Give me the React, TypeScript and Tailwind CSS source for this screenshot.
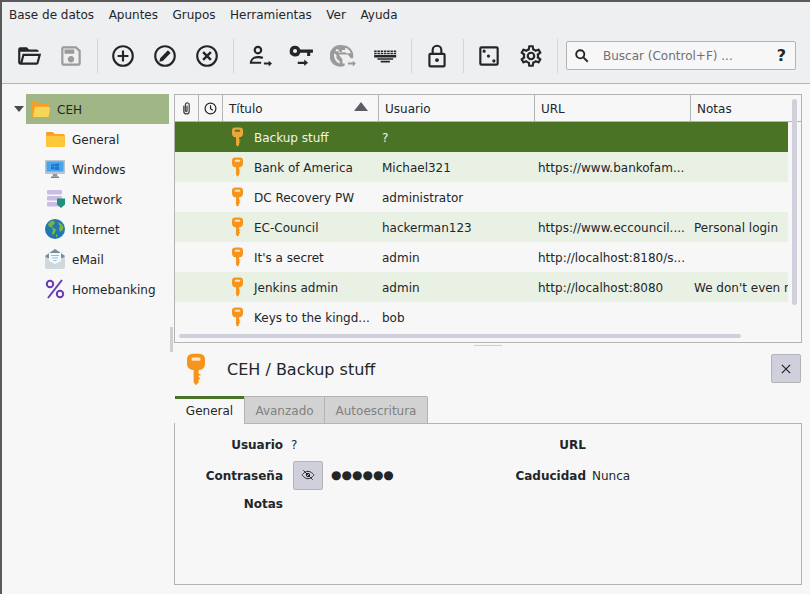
import type { ReactNode } from "react"

const font = "font-['DejaVu_Sans',sans-serif]"

function Mdi({ d, className = "" }: { d: string; className?: string }) {
  return (
    <svg viewBox="0 0 24 24" className={`w-[26px] h-[26px] ${className}`} fill="currentColor" fillRule="evenodd">
      <path d={d} />
    </svg>
  )
}

const arrow = "M16.500 18.100h4.500v-1.800l3 2.700-3 2.700v-1.800h-4.500z"
const ring = "M12,20C7.59,20 4,16.41 4,12C4,7.59 7.59,4 12,4C16.41,4 20,7.59 20,12C20,16.41 16.41,20 12,20M12,2A10,10 0 0,0 2,12A10,10 0 0,0 12,22A10,10 0 0,0 22,12A10,10 0 0,0 12,2"
const pip = (x: number, y: number) => `M${x} ${y - 1.5}a1.500 1.500 0 1 1 0 3a1.500 1.500 0 1 1 0-3Z`
const dashes = (y: number) =>
  [2, 5, 8, 11, 14, 17, 20].map((x) => `M${x} ${y}h2.300v1.300h-2.300z`).join("")

const icons = {
  open: "M6.1,10L4,18V8H21A2,2 0 0,0 19,6H12L10,4H4A2,2 0 0,0 2,6V18A2,2 0 0,0 4,20H19C19.9,20 20.7,19.4 20.9,18.5L23.2,10H6.1M19,18H6L7.6,12H20.6L19,18Z",
  save: "M17 3H5C3.89 3 3 3.9 3 5V19C3 20.1 3.89 21 5 21H19C20.1 21 21 20.1 21 19V7L17 3M19 19H5V5H16.17L19 7.83V19M12 12C10.34 12 9 13.34 9 15S10.34 18 12 18 15 16.66 15 15 13.66 12 12 12M6 6H15V10H6V6Z",
  plus: ring + "M13,7H11V11H7V13H11V17H13V13H17V11H13V7Z",
  edit: ring + "M14.700,6.800L17.200,9.300L10,16.500L6.800,17.200L7.500,14Z",
  del: ring + "M14.800,7.600L12,10.400L9.200,7.600L7.600,9.200L10.400,12L7.600,14.800L9.200,16.400L12,13.600L14.800,16.400L16.400,14.800L13.600,12L16.400,9.200Z",
  user: "M11 2.500a4 4 0 1 1 0 8 4 4 0 0 1 0-8m0 2a2 2 0 1 0 0 4 2 2 0 0 0 0-4M11 12c2 0 3.700.3 5 .9l-1 1.800c-1-.4-2.300-.7-4-.7-3.300 0-5 1.200-5.300 3.200H14v2H3.500c0-4.700 3.500-7.200 7.500-7.200Z" + arrow,
  key: "M6.500 2.500a5 5 0 0 1 4.800 3.500H23v3h-2.500v3h-2.800V9h-6.400a5 5 0 1 1-4.800-6.500m0 3a1.900 1.900 0 1 0 0 3.800 1.900 1.900 0 0 0 0-3.800Z" + "M9 17.300h6v-2l3.500 3-3.500 3v-2H9z",
  web: "M11.500 2a10 10 0 0 1 10 10c0 .7-.1 1.400-.2 2h-2.100l-2.700-3.500H8l3.500 4.500v3.900a7.900 7.900 0 0 0 2 .1v2A10 10 0 1 1 11.500 2M4 9.500A8 8 0 0 0 9 19.100V17l-3-3V11zM14 4.400V6.500h-3V9H8V6L6 5.500A8 8 0 0 0 5 7.500h4v1h5l1 1h4.300A8 8 0 0 0 14 4.400Z" + arrow,
  keyboard: dashes(7) + dashes(9) + "M2 11h20.300v2.300H2zM5 14h14.500v1.500H5zM8 16.300h8.500v1.700H8z",
  lock: "M12 1.500a5 5 0 0 1 5 5V9h1a2 2 0 0 1 2 2v9.500a2 2 0 0 1-2 2H6a2 2 0 0 1-2-2V11a2 2 0 0 1 2-2h1V6.500a5 5 0 0 1 5-5m0 2a3 3 0 0 0-3 3V9h6V6.500a3 3 0 0 0-3-3M6 11v9.500h12V11zm6 3a1.800 1.800 0 1 1 0 3.600 1.800 1.800 0 0 1 0-3.600Z",
  dice: "M5 3h14a2 2 0 0 1 2 2v14a2 2 0 0 1-2 2H5a2 2 0 0 1-2-2V5a2 2 0 0 1 2-2ZM5 5v14h14V5Z" + pip(7.500, 7.500) + pip(11.500, 12) + pip(16.500, 16.500),
  gear: "M12,8A4,4 0 0,1 16,12A4,4 0 0,1 12,16A4,4 0 0,1 8,12A4,4 0 0,1 12,8M12,10A2,2 0 0,0 10,12A2,2 0 0,0 12,14A2,2 0 0,0 14,12A2,2 0 0,0 12,10M10,22C9.750,22 9.540,21.820 9.500,21.580L9.130,18.930C8.500,18.680 7.960,18.340 7.440,17.940L4.950,18.950C4.730,19.030 4.460,18.950 4.340,18.730L2.340,15.270C2.210,15.050 2.270,14.780 2.460,14.630L4.570,12.970L4.500,12L4.570,11L2.460,9.370C2.270,9.220 2.210,8.950 2.340,8.730L4.340,5.270C4.460,5.050 4.730,4.960 4.950,5.050L7.440,6.050C7.960,5.660 8.500,5.320 9.130,5.070L9.500,2.420C9.540,2.180 9.750,2 10,2H14C14.250,2 14.460,2.180 14.500,2.420L14.870,5.070C15.500,5.320 16.040,5.660 16.560,6.050L19.050,5.050C19.270,4.960 19.540,5.050 19.660,5.270L21.660,8.730C21.790,8.950 21.730,9.220 21.540,9.370L19.430,11L19.500,12L19.430,13L21.540,14.630C21.730,14.780 21.790,15.050 21.660,15.270L19.660,18.730C19.540,18.950 19.270,19.040 19.050,18.950L16.560,17.950C16.040,18.340 15.500,18.680 14.870,18.930L14.500,21.580C14.460,21.820 14.250,22 14,22H10M11.250,4L10.880,6.610C9.680,6.860 8.620,7.500 7.850,8.390L5.440,7.350L4.690,8.650L6.800,10.200C6.400,11.370 6.400,12.640 6.800,13.800L4.680,15.360L5.430,16.660L7.860,15.620C8.630,16.500 9.680,17.140 10.870,17.380L11.240,20H12.760L13.130,17.390C14.320,17.140 15.370,16.500 16.140,15.620L18.570,16.660L19.320,15.360L17.200,13.810C17.600,12.640 17.600,11.370 17.200,10.200L19.310,8.650L18.560,7.350L16.150,8.390C15.380,7.500 14.320,6.860 13.120,6.620L12.750,4H11.250Z",
}

function ToolButton({ d, muted }: { d: string; muted?: boolean }) {
  return (
    <div className={`w-[42px] flex items-center justify-center ${muted ? "text-[#9a9a9a]" : "text-[#232629]"}`}>
      <Mdi d={d} />
    </div>
  )
}

function Sep() {
  return (
    <div className="w-[10px] flex justify-center self-center">
      <div className="w-px h-[34px] bg-[#d4d5d7]" />
    </div>
  )
}

function Toolbar() {
  return (
    <div className="h-[55px] flex items-center pl-[6px] pr-[12px]">
      <ToolButton d={icons.open} />
      <ToolButton d={icons.save} muted />
      <Sep />
      <ToolButton d={icons.plus} />
      <ToolButton d={icons.edit} />
      <ToolButton d={icons.del} />
      <Sep />
      <ToolButton d={icons.user} />
      <ToolButton d={icons.key} />
      <ToolButton d={icons.web} muted />
      <ToolButton d={icons.keyboard} />
      <Sep />
      <ToolButton d={icons.lock} />
      <Sep />
      <ToolButton d={icons.dice} />
      <ToolButton d={icons.gear} />
      <Sep />
      <div className="ml-[4px] w-[230px] h-[29px] flex items-center border border-[#b4b4b4] rounded-[2px] bg-[#f7f7f7]">
        <svg viewBox="0 0 24 24" className="w-[15px] h-[15px] ml-[7px] text-[#232629]" fill="none" stroke="currentColor" strokeWidth="3">
          <circle cx="10" cy="10" r="6.500" />
          <path d="M15 15l7 7" />
        </svg>
        <span className="ml-[14px] text-[#6e7075] flex-1">Buscar (Control+F) ...</span>
        <span className="mr-[9px] text-[16px] font-bold text-[#232629]">?</span>
      </div>
    </div>
  )
}

function KeyIcon({ muted, className = "w-[11px] h-[20px]" }: { muted?: boolean; className?: string }) {
  const fill = muted ? "#eba737" : "#f7941d"
  return (
    <svg viewBox="0 0 12 21" className={className}>
      <path d="M3.500 0h5A3.500 3.500 0 0 1 12 3.500v3.500a4 4 0 0 1-4.200 3.800V13.500h1.200v1H7.800v1.500h1v1H7.800V19l-1.800 2-1.600-2v-8.200A4 4 0 0 1 0 7V3.500A3.500 3.500 0 0 1 3.500 0Z" fill={fill} />
      <rect x="3" y="2.500" width="6" height="2.200" rx="1" fill={muted ? "#5d6f33" : "#fde5c6"} />
    </svg>
  )
}

function FolderIcon({ light }: { light?: boolean }) {
  return (
    <svg viewBox="0 0 20 16" className="w-[19px] h-[15px]">
      <path d="M1 0h6l2 2h9a2 2 0 0 1 2 2v10a2 2 0 0 1-2 2H2a2 2 0 0 1-2-2V1a1 1 0 0 1 1-1Z" fill="#f59f24" />
      {light ? (
        <path d="M4 5h14a2 2 0 0 1 2 2l-1 7a2 2 0 0 1-2 2H2Z" fill="#f6d659" />
      ) : (
        <path d="M0 4h18a2 2 0 0 1 2 2v8a2 2 0 0 1-2 2H2a2 2 0 0 1-2-2Z" fill="#ffc73a" />
      )}
    </svg>
  )
}

const groupIcons: Record<string, ReactNode> = {
  General: <FolderIcon />,
  Windows: (
    <svg viewBox="0 0 20 18" className="w-[20px] h-[18px]">
      <rect width="20" height="14" rx="1" fill="#b9c4cc" />
      <rect x="1.500" y="1.500" width="17" height="10" fill="#4aa3e8" />
      <path d="M6 4.500l3.500-.5v2.500H6zM10 4l4-.6v3.100h-4zM6 7h3.500v2.500L6 9zM10 7h4v3.100l-4-.6z" fill="#1976d2" />
      <path d="M8 14h4l.500 2.500h-5z" fill="#8a979f" />
      <rect x="6" y="16.500" width="8" height="1.500" fill="#78858d" />
    </svg>
  ),
  Network: (
    <svg viewBox="0 0 20 18" className="w-[20px] h-[18px]">
      <rect x="2" y="0" width="15" height="4.500" rx="1" fill="#c9bde6" />
      <rect x="2" y="6" width="15" height="4.500" rx="1" fill="#c9bde6" />
      <rect x="2" y="12" width="15" height="4.500" rx="1" fill="#c9bde6" />
      <path d="M12 8.500h8v6l-4 3.500-4-3.500Z" fill="#1f8f7f" />
    </svg>
  ),
  Internet: (
    <svg viewBox="0 0 20 20" className="w-[20px] h-[20px]">
      <circle cx="10" cy="10" r="10" fill="#1f77b4" />
      <path d="M8 1.500c-2 .5-4 2-5 4l1 2 3 1 1 3-1 2 1 3 2-3 1-3-3-2-1-2 2-1 1-2zM13 3l1 3 1 1-1 3 1 3 3-2 .5-3-2-3zM11 15l2 1.500-2 2z" fill="#7cb342" />
    </svg>
  ),
  eMail: (
    <svg viewBox="0 0 20 20" className="w-[20px] h-[20px]">
      <path d="M0 7l10-7 10 7v11a2 2 0 0 1-2 2H2a2 2 0 0 1-2-2Z" fill="#cfd8dc" />
      <path d="M0 7l10-7 10 7-2 2H2Z" fill="#78909c" />
      <path d="M4 4h12v8l-6 3-6-3Z" fill="#f4f8fa" />
      <path d="M6 6h8v1H6zM7 8.500h6v1H7zM8.500 11h3v1h-3z" fill="#81c3e8" />
    </svg>
  ),
  Homebanking: (
    <svg viewBox="0 0 20 20" className="w-[20px] h-[20px]" fill="none" stroke="#673ab7" strokeWidth="2">
      <circle cx="5" cy="5" r="3.200" />
      <circle cx="15" cy="15" r="3.200" />
      <path d="M17 1L3 19" />
    </svg>
  ),
}

function Sidebar() {
  return (
    <div className="w-[172px] shrink-0 flex flex-col pt-[10px] relative">
      <div className="flex items-center">
        <div className="w-[24px] flex justify-end pr-[2px]">
          <div className="w-0 h-0 border-l-[5px] border-r-[5px] border-t-[6px] border-l-transparent border-r-transparent border-t-[#4a4a50]" />
        </div>
        <div className="w-[143px] h-[30px] bg-[#a0b686] flex items-center pl-[5px]">
          <FolderIcon light />
          <span className="ml-[7px] pt-[2px]">CEH</span>
        </div>
      </div>
      {Object.keys(groupIcons).map((name) => (
        <div key={name} className="h-[30px] flex items-center">
          <div className="w-[43px] shrink-0" />
          <div className="w-[20px] flex justify-center">{groupIcons[name]}</div>
          <span className="ml-[7px] pt-[2px]">{name}</span>
        </div>
      ))}
      <div className="absolute right-[1px] top-[243px] w-[3px] h-[25px] bg-[#cfcfcf]" />
    </div>
  )
}

const rows = [
  ["Backup stuff", "?", "", ""],
  ["Bank of America", "Michael321", "https://www.bankofam...", ""],
  ["DC Recovery PW", "administrator", "", ""],
  ["EC-Council", "hackerman123", "https://www.eccouncil....", "Personal login"],
  ["It's a secret", "admin", "http://localhost:8180/s...", ""],
  ["Jenkins admin", "admin", "http://localhost:8080", "We don't even r"],
  ["Keys to the kingd...", "bob", "", ""],
]

function HeaderCell({ className, children }: { className: string; children?: ReactNode }) {
  return <div className={`h-full border-r border-[#b4b4b4] flex items-center shrink-0 ${className}`}>{children}</div>
}

function EntryTable() {
  return (
    <div className="h-[249px] border border-[#b4b4b4] relative overflow-hidden bg-[#f7f7f7]">
      <div className="h-[27px] flex border-b border-[#b4b4b4] w-[626px]">
        <HeaderCell className="w-[24px] justify-center">
          <svg viewBox="0 0 24 24" className="w-[13px] h-[13px]" fill="none" stroke="#4a4a50" strokeWidth="2.400">
            <path d="M7 7v10a5 5 0 0 0 10 0V5a3.500 3.500 0 0 0-7 0v11a1.500 1.500 0 0 0 3 0V7" />
          </svg>
        </HeaderCell>
        <HeaderCell className="w-[24px] justify-center">
          <svg viewBox="0 0 24 24" className="w-[13px] h-[13px]" fill="none" stroke="#232629" strokeWidth="2.200">
            <circle cx="12" cy="12" r="10" />
            <path d="M12 6v6.500l4 2.500" />
          </svg>
        </HeaderCell>
        <HeaderCell className="w-[156px] pl-[6px] justify-between pr-[10px]">
          <span className="pt-[2px]">Título</span>
          <div className="w-0 h-0 border-l-[7px] border-r-[7px] border-b-[9px] border-l-transparent border-r-transparent border-b-[#5c5c64] mb-[3px]" />
        </HeaderCell>
        <HeaderCell className="w-[156px] pl-[6px] pt-[2px]">Usuario</HeaderCell>
        <HeaderCell className="w-[156px] pl-[6px] pt-[2px]">URL</HeaderCell>
        <div className="pl-[6px] pt-[2px] flex items-center">Notas</div>
      </div>
      {rows.map((row, i) => {
        const bg = i === 0 ? "bg-[#4a7326] text-[#f2f5ee]" : i % 2 === 1 ? "bg-[#e9f1e5]" : ""
        return (
          <div key={row[0]} className={`w-[613px] h-[30px] flex items-center overflow-hidden whitespace-nowrap ${bg}`}>
            <div className="w-[48px] shrink-0" />
            <div className="w-[31px] shrink-0 flex justify-center pr-[2px]">
              <KeyIcon muted={i === 0} />
            </div>
            <div className="w-[128px] shrink-0 pt-[2px]">{row[0]}</div>
            <div className="w-[156px] shrink-0 pt-[2px]">{row[1]}</div>
            <div className="w-[156px] shrink-0 pt-[2px]">{row[2]}</div>
            <div className="shrink-0 pt-[2px]">{row[3]}</div>
          </div>
        )
      })}
      <div className="absolute left-[617px] top-[4px] w-[5px] h-[206px] rounded-full bg-[#cfd0dc]" />
      <div className="absolute left-[4px] top-[239px] h-[4px] w-[562px] rounded-full bg-[#cfd0dc]" />
    </div>
  )
}

function Details() {
  return (
    <div className="flex-1 flex flex-col min-h-0">
      <div className="h-[1px] w-[28px] bg-[#cfcfcf] self-center mt-[2px]" />
      <div className="h-[50px] pb-[5px] flex items-center">
        <div className="w-[53px] flex justify-center pr-[10px] pt-[2px]">
          <KeyIcon className="w-[18px] h-[33px]" />
        </div>
        <span className="text-[16px] flex-1 pt-[3px]">CEH / Backup stuff</span>
        <div className="w-[30px] h-[29px] mr-[1px] rounded-[2px] border border-[#b4b4b4] bg-[#cfd0dc] flex items-center justify-center">
          <svg viewBox="0 0 12 12" className="w-[10px] h-[10px]" stroke="#232629" strokeWidth="1.500">
            <path d="M1 1l10 10M11 1L1 11" />
          </svg>
        </div>
      </div>
      <div className="flex h-[28px] pl-[1px] relative z-10 -mb-px">
        <div className="w-[69px] h-[28px] border-t-[3px] border-t-[#4a7326] bg-[#f7f7f7] pb-[2px] flex items-center justify-center">General</div>
        <div className="w-[81px] h-[28px] border border-[#b4b4b4] bg-[#d2d2d2] text-[#818181] pt-[2px] flex items-center justify-center">Avanzado</div>
        <div className="w-[103px] h-[28px] border border-l-0 border-[#b4b4b4] rounded-tr-[2px] bg-[#d2d2d2] text-[#818181] pt-[2px] flex items-center justify-center">Autoescritura</div>
      </div>
      <div className="h-[162px] border border-[#b4b4b4] pt-[7px] grid grid-cols-[108px_195px_108px_1fr] content-start items-center">
        <div className="h-[27px] flex items-center justify-end font-bold">Usuario</div>
        <div className="h-[27px] flex items-center pl-[8px]">?</div>
        <div className="h-[27px] flex items-center justify-end font-bold">URL</div>
        <div />
        <div className="h-[34px] pt-[2px] flex items-center justify-end font-bold">Contraseña</div>
        <div className="h-[34px] flex items-center pl-[10px]">
          <div className="w-[30px] h-[29px] rounded-[2px] border border-[#b4b4b4] bg-[#cfd0dc] flex items-center justify-center">
            <svg viewBox="0 0 24 24" className="w-[16px] h-[16px]" fill="none" stroke="#232629" strokeWidth="1.500">
              <path d="M3 12s4-5.500 9-5.500 9 5.500 9 5.500-4 5.500-9 5.500-9-5.500-9-5.500Z" />
              <circle cx="12" cy="12" r="2.500" />
              <path d="M5 5l14 14" />
            </svg>
          </div>
          <span className="ml-[8px] text-[12px]">●●●●●●</span>
        </div>
        <div className="h-[34px] pt-[2px] flex items-center justify-end font-bold">Caducidad</div>
        <div className="h-[34px] pt-[2px] flex items-center pl-[6px]">Nunca</div>
        <div className="h-[23px] flex items-center justify-end font-bold">Notas</div>
      </div>
    </div>
  )
}

export default function App() {
  return (
    <div className={`${font} w-[810px] h-[594px] overflow-hidden border-l-2 border-t-2 border-[#5a5a5a] bg-[#f7f7f7] text-[#232629] text-[12px] flex flex-col`}>
      <div className="h-[82px] shrink-0 bg-[#eeeff1] border-b border-[#b4b4b4]">
        <div className="h-[26px] flex items-center pl-[7px] gap-[14.5px]">
          {["Base de datos", "Apuntes", "Grupos", "Herramientas", "Ver", "Ayuda"].map((m) => (
            <span key={m}>{m}</span>
          ))}
        </div>
        <Toolbar />
      </div>
      <div className="flex-1 flex min-h-0">
        <Sidebar />
        <div className="w-[628px] flex flex-col pt-[10px] pb-[9px]">
          <EntryTable />
          <Details />
        </div>
      </div>
    </div>
  )
}
